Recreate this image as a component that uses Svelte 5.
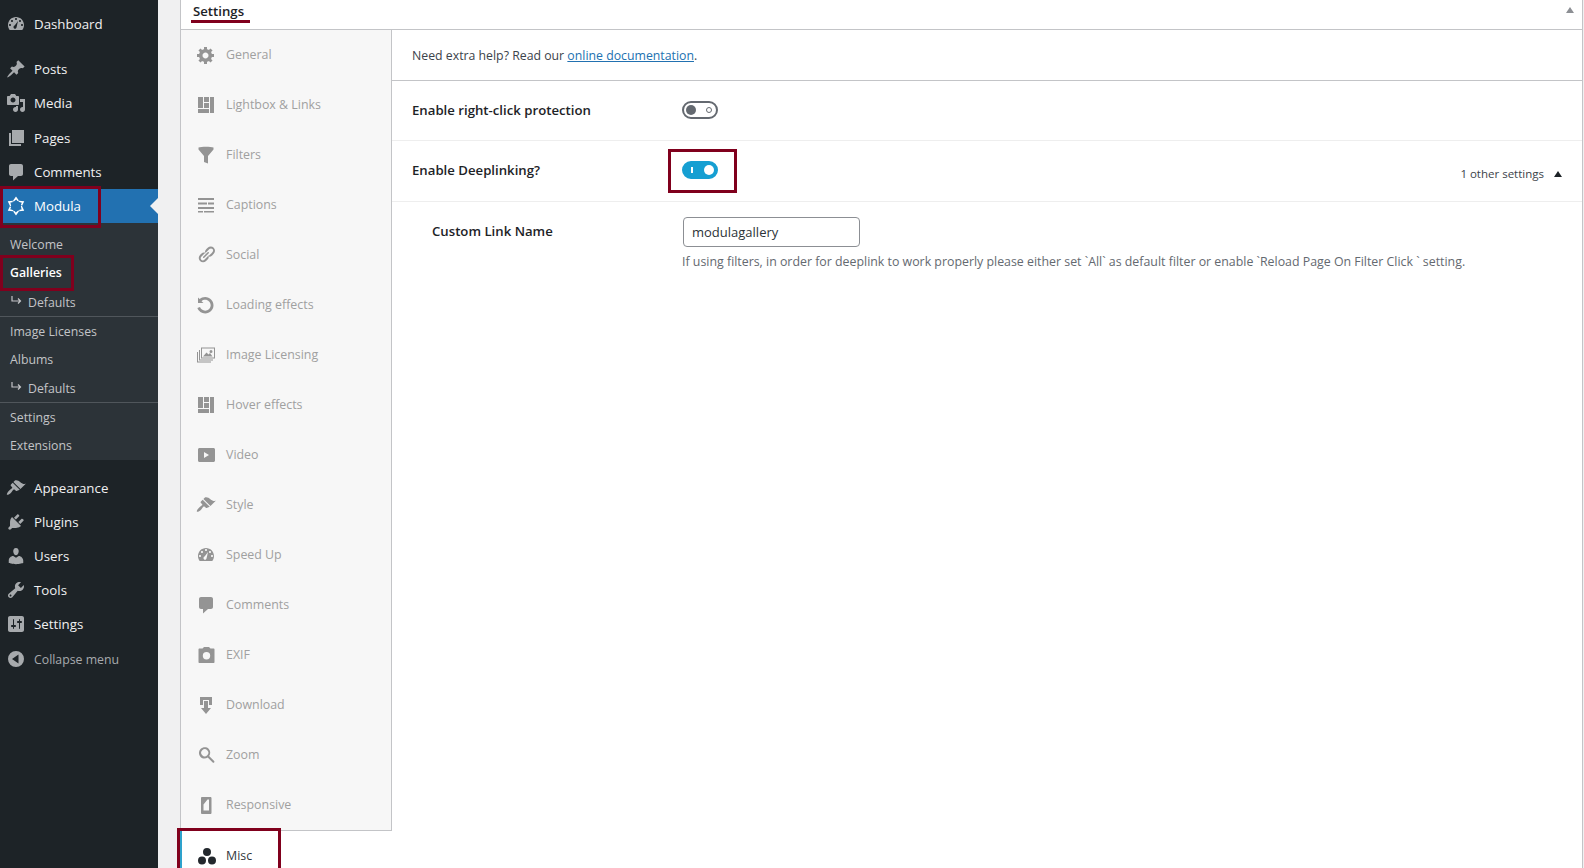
<script lang="ts">
  const icons = {
    dashboard: "M3.76 16h12.48c1.1-1.37 1.76-3.11 1.76-5 0-4.42-3.58-8-8-8s-8 3.58-8 8c0 1.89.66 3.63 1.76 5zM10 4c.55 0 1 .45 1 1s-.45 1-1 1-1-.45-1-1 .45-1 1-1zM6 6c.55 0 1 .45 1 1s-.45 1-1 1-1-.45-1-1 .45-1 1-1zm8 0c.55 0 1 .45 1 1s-.45 1-1 1-1-.45-1-1 .45-1 1-1zm-5.37 5.55L12 7l-1.5 6.5c-.3.9-1.2 1.5-2 1.2s-1.2-1.2-.9-2.1c.1-.5.5-1 1.03-1.05zM4 10c.55 0 1 .45 1 1s-.45 1-1 1-1-.45-1-1 .45-1 1-1zm12 0c.55 0 1 .45 1 1s-.45 1-1 1-1-.45-1-1 .45-1 1-1z",
    pin: "M10.44 3.02l1.82-1.82 6.36 6.35-1.83 1.82c-1.05-.68-2.48-.57-3.41.36l-.75.75c-.92.93-1.04 2.35-.35 3.41l-1.83 1.82-2.41-2.41-2.8 2.79c-.42.42-3.38 2.71-3.8 2.29s1.86-3.39 2.28-3.81l2.79-2.79L4.1 9.36l1.83-1.82c1.05.69 2.48.57 3.4-.36l.75-.75c.93-.92 1.05-2.35.36-3.41z",
    media: "M13 11V4c0-.55-.45-1-1-1h-1.67L9 1H5L3.67 3H2c-.55 0-1 .45-1 1v7c0 .55.45 1 1 1h10c.55 0 1-.45 1-1zM7 4.5c1.38 0 2.5 1.12 2.5 2.5S8.38 9.5 7 9.5 4.5 8.38 4.5 7 5.62 4.5 7 4.5zM14 6h5v10.5c0 1.38-1.12 2.5-2.5 2.5S14 17.88 14 16.5s1.12-2.5 2.5-2.5c.17 0 .34.02.5.05V9h-3V6zm-4 8.05V13h2v3.5c0 1.38-1.12 2.5-2.5 2.5S7 17.88 7 16.5 8.12 14 9.5 14c.17 0 .34.02.5.05z",
    pages: "M6 15V2h12v13H6zm-1 1h10v2H3V5h2v11z",
    comment: "M5 2h10c1.1 0 2 .9 2 2v8c0 1.1-.9 2-2 2h-3l-5 4.5V14H5c-1.1 0-2-.9-2-2V4c0-1.1.9-2 2-2z",
    brush: "M14.48 11.06L7.41 3.99l1.5-1.5c.5-.56 2.3-.47 3.51.32 1.21.8 1.43 1.28 2.91 2.1 1.18.64 2.45 1.26 4.45.85zm-.71.71L6.7 4.7 4.93 6.47c-.39.39-.39 1.02 0 1.41l1.06 1.06c.39.39.39 1.03 0 1.42-.6.6-1.43 1.11-2.21 1.69-.35.26-.7.53-1.01.84-1.22 1.22-2.38 3.21-1.8 3.79s2.6-.57 3.82-1.79c.31-.31.58-.66.84-1.01.58-.78 1.09-1.61 1.69-2.21.39-.39 1.03-.39 1.42 0l1.06 1.06c.39.39 1.02.39 1.41 0z",
    plugin: "M13.11 4.36L9.87 7.6 8 5.73l3.24-3.24c.35-.34 1.05-.2 1.56.32.52.51.66 1.21.31 1.55zm-8 1.77l.91-1.12 9.01 9.01-1.19.84c-.71.71-2.63 1.16-3.82 1.16H6.14L4.9 17.26c-.59.59-1.54.59-2.12 0-.59-.58-.59-1.53 0-2.12l1.24-1.24v-3.88c0-1.13.4-3.19 1.09-3.89zm7.26 3.97l3.24-3.24c.34-.35 1.04-.21 1.55.31.52.51.66 1.21.31 1.55l-3.24 3.25z",
    user: "M10 9.25c-2.27 0-2.73-3.44-2.73-3.44C7 4.02 7.82 2 9.97 2c2.16 0 2.98 2.02 2.71 3.81 0 0-.41 3.44-2.68 3.44zm0 2.57L12.72 10c2.39 0 4.52 2.33 4.52 4.53v2.49s-3.65 1.13-7.24 1.13c-3.65 0-7.24-1.13-7.24-1.13v-2.49c0-2.25 1.94-4.48 4.47-4.48z",
    tool: "M16.68 9.77c-1.34 1.34-3.3 1.67-4.95.99l-5.41 6.52c-.99.99-2.59.99-3.58 0s-.99-2.59 0-3.57l6.52-5.42c-.68-1.65-.35-3.61.99-4.95 1.28-1.28 3.12-1.62 4.72-1.06l-2.89 2.89 2.82 2.82 2.86-2.87c.53 1.58.18 3.39-1.08 4.65zM3.81 16.21c.4.39 1.04.39 1.43 0 .4-.4.4-1.04 0-1.43-.39-.4-1.03-.4-1.43 0-.39.39-.39 1.03 0 1.43z",
    sliders: "M18 16V4c0-1.1-.9-2-2-2H4c-1.1 0-2 .9-2 2v12c0 1.1.9 2 2 2h12c1.1 0 2-.9 2-2zM8 11h1c.55 0 1 .45 1 1s-.45 1-1 1H8v1.5c0 .28-.22.5-.5.5s-.5-.22-.5-.5V13H6c-.55 0-1-.45-1-1s.45-1 1-1h1V5.5c0-.28.22-.5.5-.5s.5.22.5.5V11zm5-2h-1c-.55 0-1-.45-1-1s.45-1 1-1h1V5.5c0-.28.22-.5.5-.5s.5.22.5.5V7h1c.55 0 1 .45 1 1s-.45 1-1 1h-1v5.5c0 .28-.22.5-.5.5s-.5-.22-.5-.5V9z",
    collapse: "M10 2a8 8 0 100 16 8 8 0 000-16zM12.5 5.5v9L6 10z",
    gear: "M18 12h-2.18c-.17.7-.44 1.35-.81 1.93l1.54 1.54-2.1 2.1-1.54-1.54c-.58.36-1.23.63-1.91.79V19H8v-2.18c-.68-.16-1.33-.43-1.91-.79l-1.54 1.54-2.12-2.12 1.54-1.54c-.36-.58-.63-1.23-.79-1.91H1V9.03h2.17c.16-.7.44-1.35.8-1.94L2.43 5.55l2.1-2.1 1.54 1.54c.58-.37 1.24-.64 1.93-.81V2h3v2.18c.68.16 1.33.43 1.91.79l1.54-1.54 2.12 2.12-1.54 1.54c.36.59.64 1.24.8 1.94H18V12zm-8.5 1.5c1.66 0 3-1.34 3-3s-1.34-3-3-3-3 1.34-3 3 1.34 3 3 3z",
    layout: "M2 2h5v11H2V2zm6 0h5v5H8V2zm6 0h4v16h-4V2zM8 8h5v5H8V8zm-6 6h11v4H2v-4z",
    funnel: "M2.5 2.5c3-1 12-1 15 0v2L12 11v7.5l-4-1.5V11L2.5 4.5z",
    captions: "M2 3h16v2H2V3zm0 4.500h9v2H2v-2zm10 0h6v2h-6v-2zM2 12h16v2H2v-2zm0 4h5v1.500H2V16zm6 0h10v1.500H8V16z",
    link: "M17.74 2.76c1.68 1.69 1.68 4.41 0 6.1l-1.53 1.52c-1.12 1.12-2.7 1.5-4.13 1.15l3.65-3.65.76-.76c.84-.84.84-2.21 0-3.05-.84-.84-2.2-.84-3.05 0l-.76.76-3.65 3.65c-.35-1.43.03-3.01 1.15-4.13l1.52-1.53c1.69-1.68 4.41-1.68 6.04-.06zM8.56 7.6c1.12-1.12 .96-.3 1.15-.3l-3.65 3.65-.76.76c-.84.84-.84 2.2 0 3.05.84.84 2.21.84 3.05 0l.76-.76 3.65-3.65c.35 1.43-.03 3.01-1.15 4.13l-1.52 1.53c-1.69 1.68-4.41 1.68-6.1 0-1.68-1.69-1.68-4.41 0-6.1l1.52-1.52c.84-.84 2.2-1.2 3.6-.79zm4.2-.42c.3.3.3.78 0 1.08l-4.5 4.5c-.3.3-.78.3-1.08 0s-.3-.78 0-1.08l4.5-4.5c.3-.3.78-.3 1.08 0z",
    reload: "M2 2.5l1.6 1.6C5 2.8 7 2 9.2 2c4.6 0 8.3 3.7 8.3 8.3s-3.7 8.2-8.3 8.2c-3.6 0-6.6-2.2-7.8-5.4l2.6-1c.8 2.1 2.8 3.6 5.2 3.6 3 0 5.5-2.4 5.5-5.4s-2.5-5.5-5.5-5.5c-1.4 0-2.7.5-3.7 1.4L7.5 8H2V2.5z",
    images: "M5 2.5h14v11H5v-11zm1 1v9h12v-9H6zm1 8l3.5-4 2 2 1.5-1.5 2.5 3.5H7zm8-6.5a1.5 1.5 0 110 3 1.5 1.5 0 010-3zM3 5h1v9.5h13v1H3V5zM1 7h1v9.5h13v1H1V7z",
    video: "M3.5 3h14c.8 0 1.5.7 1.5 1.5v11c0 .8-.7 1.5-1.5 1.5h-14C2.700 17 2 16.300 2 15.500v-11C2 3.700 2.700 3 3.500 3zM8 7v6l5-3z",
    camera: "M6.500 3.500L8 2h5l1.500 1.500h3c.6 0 1 .4 1 1V17c0 .6-.4 1-1 1h-14c-.6 0-1-.4-1-1V4.500c0-.6.4-1 1-1h3zM10.500 7a3.700 3.700 0 100 7.400 3.700 3.700 0 000-7.400z",
    download: "M4 2h12v8h-3V5H7v5H4V2zm4 4h4v7h3l-5 6-5-6h3V6z",
    search: "M12.640 3.780c1.960 1.960 2.130 5.030.52 7.180l5 5c.4.400.4 1.040 0 1.440-.4.4-1.040.4-1.440 0l-5-5c-2.150 1.610-5.220 1.440-7.180-.52-2.150-2.150-2.150-5.620 0-7.770s5.950-2.480 8.100-.33zm-1.410 1.410a3.500 3.500 0 10-4.950 4.950 3.500 3.500 0 004.950-4.950z",
    phone: "M6 2h8.500c.5 0 1 .5 1 1v15c0 .500-.5 1-1 1H6c-.5 0-1-.5-1-1V3c0-.5.5-1 1-1zm1.500 2.500v11h5.500v-11h-1.500L7.500 9.500z",
    misc: "M10 2a4 4 0 110 8 4 4 0 010-8zM5 10.500a4 4 0 110 8 4 4 0 010-8zM15 10.500a4 4 0 110 8 4 4 0 010-8z",
  };

  const menuTop = [
    { label: "Posts", icon: icons.pin },
    { label: "Media", icon: icons.media },
    { label: "Pages", icon: icons.pages },
    { label: "Comments", icon: icons.comment },
  ];
  const menuBottom = [
    { label: "Appearance", icon: icons.brush },
    { label: "Plugins", icon: icons.plugin },
    { label: "Users", icon: icons.user },
    { label: "Tools", icon: icons.tool },
    { label: "Settings", icon: icons.sliders },
  ];
  const tabs = [
    { label: "General", icon: icons.gear },
    { label: "Lightbox & Links", icon: icons.layout },
    { label: "Filters", icon: icons.funnel },
    { label: "Captions", icon: icons.captions },
    { label: "Social", icon: icons.link },
    { label: "Loading effects", icon: icons.reload },
    { label: "Image Licensing", icon: icons.images },
    { label: "Hover effects", icon: icons.layout },
    { label: "Video", icon: icons.video },
    { label: "Style", icon: icons.brush },
    { label: "Speed Up", icon: icons.dashboard },
    { label: "Comments", icon: icons.comment },
    { label: "EXIF", icon: icons.camera },
    { label: "Download", icon: icons.download },
    { label: "Zoom", icon: icons.search },
    { label: "Responsive", icon: icons.phone },
  ];
</script>

{#snippet childArrow()}
  <svg class="arrow" viewBox="0 0 11 9"><path d="M1 0v5h8M7 2.500l2.500 2.500L7 7.500" /></svg>
{/snippet}

<div class="page">
  <nav class="sidebar">
    <a class="item dash">
      <svg viewBox="0 0 20 20"><path fill-rule="evenodd" d={icons.dashboard} /></svg>
      <span>Dashboard</span>
    </a>
    {#each menuTop as m}
      <a class="item">
        <svg viewBox="0 0 20 20"><path fill-rule="evenodd" d={m.icon} /></svg>
        <span>{m.label}</span>
      </a>
    {/each}
    <a class="item current">
      <svg viewBox="0 0 20 20">
        {#each [0, 60, 120, 180, 240, 300] as deg}
          <path d="M10 .5l3 4.300-1.600.3-1.200-1.700-2.600 2.400-.6-1z" transform="rotate({deg} 10 10)" />
        {/each}
      </svg>
      <span>Modula</span>
      <i class="notch"></i>
    </a>
    <div class="submenu">
      <a class="sub">Welcome</a>
      <a class="sub strong">Galleries</a>
      <a class="sub child">{@render childArrow()}Defaults</a>
      <a class="sub ruled">Image Licenses</a>
      <a class="sub">Albums</a>
      <a class="sub child">{@render childArrow()}Defaults</a>
      <a class="sub ruled">Settings</a>
      <a class="sub">Extensions</a>
    </div>
    <div class="bottom">
      {#each menuBottom as m}
        <a class="item">
          <svg viewBox="0 0 20 20"><path fill-rule="evenodd" d={m.icon} /></svg>
          <span>{m.label}</span>
        </a>
      {/each}
      <a class="item collapse">
        <svg viewBox="0 0 20 20"><path fill-rule="evenodd" d={icons.collapse} /></svg>
        <span>Collapse menu</span>
      </a>
    </div>
  </nav>

  <section class="panel">
    <header class="head">
      <h2>Settings</h2>
      <i class="caret grey"></i>
    </header>
    <div class="body">
      <div class="tabcol">
        <ul class="tabs">
          {#each tabs as t}
            <li>
              <svg viewBox="0 0 20 20"><path fill-rule="evenodd" d={t.icon} /></svg>
              <span>{t.label}</span>
            </li>
          {/each}
        </ul>
        <div class="tab-active">
          <svg viewBox="0 0 20 20"><path d={icons.misc} /></svg>
          <span>Misc</span>
        </div>
      </div>
      <div class="content">
        <p class="help">Need extra help? Read our <a href="#docs">online documentation</a>.</p>
        <div class="row first-row">
          <div class="name">Enable right-click protection</div>
          <div class="toggle"><i class="knob"></i><i class="ring"></i></div>
        </div>
        <div class="row second-row">
          <div class="name">Enable Deeplinking?</div>
          <div class="toggle on"><i class="bar"></i><i class="dot"></i></div>
          <div class="more">1 other settings <i class="caret"></i></div>
        </div>
        <div class="row child-row">
          <div class="name">Custom Link Name</div>
          <div class="field">
            <input type="text" value="modulagallery" />
            <p>If using filters, in order for deeplink to work properly please either set `All` as default filter or enable `Reload Page On Filter Click ` setting.</p>
          </div>
        </div>
      </div>
    </div>
  </section>

  <!-- red annotations drawn over the screenshot -->
  <div class="mark m-modula"></div>
  <div class="mark m-galleries"></div>
  <div class="mark m-toggle"></div>
  <div class="mark m-misc"></div>
  <div class="mark m-underline"></div>
</div>

<style>
  :global(body) {
    margin: 0;
    background: #f0f0f1;
  }

  .page {
    position: relative;
    display: flex;
    height: 868px;
    overflow: hidden;
    font-family: "Open Sans", "Noto Sans", sans-serif;
    font-size: 13px;
    color: #3c434a;
  }

  .sidebar {
    width: 158px;
    flex: none;
    background: #1d2327;
    padding-top: 7px;
    box-sizing: border-box;
  }

  .item {
    display: flex;
    align-items: center;
    height: 34px;
    position: relative;
    color: #f0f0f1;
    font-size: 13.3px;
  }

  .item svg {
    width: 20px;
    height: 20px;
    margin-left: 6px;
    margin-right: 8px;
    fill: #a7aaad;
    flex: none;
  }

  .dash {
    margin-bottom: 11px;
  }

  .dash + .item + .item + .item {
    margin-top: 1px;
  }

  .current {
    background: #2271b1;
    color: #fff;
    font-weight: 500;
  }

  .current svg {
    fill: #fff;
  }

  .notch {
    position: absolute;
    right: 0;
    top: 9px;
    border: 8px solid transparent;
    border-right-color: #f0f0f1;
    border-left-width: 0;
  }

  .submenu {
    background: #2c3338;
    height: 237px;
    box-sizing: border-box;
    padding-top: 7px;
  }

  .sub {
    display: flex;
    align-items: center;
    height: 28px;
    padding-left: 10px;
    font-size: 12.3px;
    color: #c3c4c7;
  }

  .sub.strong {
    color: #fff;
    font-weight: 600;
  }

  .sub.child {
    height: 27px;
    padding-top: 2px;
  }

  .strong + .sub.child {
    padding-top: 3px;
  }

  .arrow {
    width: 11px;
    height: 9px;
    margin: -4px 6px 0 1px;
    fill: none;
    stroke: #c3c4c7;
    stroke-width: 1.200;
    flex: none;
  }

  .sub.ruled {
    border-top: 1px solid #50565b;
  }

  .bottom {
    padding-top: 11px;
  }

  .collapse {
    height: 36px;
    color: #a7aaad;
    font-size: 12.300px;
  }

  .panel {
    position: relative;
    margin-left: 22px;
    width: 1403px;
    flex: none;
    background: #fff;
    box-sizing: border-box;
    border-left: 1px solid #c3c4c7;
    border-right: 1px solid #c3c4c7;
  }

  .head {
    height: 29px;
    border-bottom: 1px solid #c3c4c7;
    display: flex;
    align-items: flex-start;
    justify-content: space-between;
  }

  .head h2 {
    margin: 0;
    padding: 1px 0 0 12px;
    font-size: 13.200px;
    font-weight: 600;
    color: #1d2327;
    line-height: 20px;
  }

  .caret {
    display: inline-block;
    width: 0;
    height: 0;
    border-left: 4.500px solid transparent;
    border-right: 4.500px solid transparent;
    border-bottom: 6px solid #1d2327;
  }

  .caret.grey {
    border-bottom-color: #8c8f94;
    margin: 7px 8px 0 0;
  }

  .body {
    display: flex;
    height: 838px;
  }

  .tabcol {
    width: 211px;
    flex: none;
  }

  .tabs {
    list-style: none;
    margin: 0;
    padding: 0;
    background: #f7f7f7;
    border-right: 1px solid #c3c4c7;
    border-bottom: 1px solid #c3c4c7;
    box-sizing: border-box;
    height: 801px;
  }

  .tabs li {
    height: 50px;
    display: flex;
    align-items: center;
    color: #a0a0a0;
    font-size: 12.400px;
  }

  .tabs li span {
    margin-bottom: 2px;
  }

  .tabs svg, .tab-active svg {
    width: 20px;
    height: 20px;
    margin-left: 15px;
    margin-right: 10px;
    fill: #949494;
    flex: none;
  }

  .tab-active {
    height: 49px;
    display: flex;
    align-items: center;
    border-left: 2px solid #2ea2cc;
    margin-left: -1px;
    box-sizing: border-box;
    color: #32373c;
    font-size: 12.400px;
  }

  .tab-active svg {
    fill: #23282d;
    margin-left: 15px;
    margin-right: 9px;
  }

  .content {
    flex: 1;
    min-width: 0;
  }

  .help {
    margin: 0;
    height: 51px;
    box-sizing: border-box;
    padding: 17px 0 0 20px;
    line-height: 18px;
    font-size: 12.300px;
    border-bottom: 1px solid #c3c4c7;
    color: #3c434a;
  }

  .help a {
    color: #2271b1;
  }

  .row {
    display: flex;
    align-items: center;
    border-bottom: 1px solid #eeeeee;
    box-sizing: border-box;
    position: relative;
  }

  .first-row {
    height: 60px;
  }

  .second-row {
    height: 61px;
  }

  .child-row {
    border-bottom: none;
    align-items: flex-start;
    padding-top: 15px;
  }

  .name {
    width: 270px;
    padding-left: 20px;
    padding-bottom: 2px;
    box-sizing: border-box;
    font-size: 13.200px;
    font-weight: 600;
    color: #1d2327;
  }

  .child-row .name {
    padding-left: 40px;
    padding-top: 5px;
  }

  .toggle {
    width: 36px;
    height: 18px;
    position: relative;
    box-sizing: border-box;
    border: 2px solid #646970;
    border-radius: 9px;
    background: #fff;
    margin: -2px 0 0 20px;
  }

  .knob {
    position: absolute;
    left: 2px;
    top: 2px;
    width: 10px;
    height: 10px;
    border-radius: 50%;
    background: #646970;
  }

  .ring {
    position: absolute;
    right: 4px;
    top: 4px;
    width: 6px;
    height: 6px;
    box-sizing: border-box;
    border: 1px solid #646970;
    border-radius: 50%;
  }

  .toggle.on {
    background: #169fd2;
    border-color: #169fd2;
  }

  .bar {
    position: absolute;
    left: 7px;
    top: 4px;
    width: 1.500px;
    height: 6px;
    background: #fff;
  }

  .dot {
    position: absolute;
    right: 2px;
    top: 2px;
    width: 10px;
    height: 10px;
    border-radius: 50%;
    background: #fff;
  }

  .more {
    position: absolute;
    right: 20px;
    top: 24px;
    font-size: 11.500px;
    line-height: 18px;
    display: flex;
    align-items: center;
    gap: 10px;
  }

  .field {
    padding-left: 21px;
  }

  .field input {
    display: block;
    width: 177px;
    height: 30px;
    box-sizing: border-box;
    border: 1px solid #8c8f94;
    border-radius: 4px;
    padding: 0 8px;
    font: inherit;
    font-size: 13px;
    color: #2c3338;
    background: #fff;
  }

  .field p {
    margin: 5px 0 0 -1px;
    font-size: 12.360px;
    line-height: 20px;
    color: #646970;
    white-space: nowrap;
  }

  .mark {
    position: absolute;
    box-sizing: border-box;
    border: 3px solid #80001d;
  }

  .m-modula {
    left: 0;
    top: 186px;
    width: 101px;
    height: 42px;
  }

  .m-galleries {
    left: 0;
    top: 255px;
    width: 74px;
    height: 36px;
  }

  .m-toggle {
    left: 668px;
    top: 149px;
    width: 69px;
    height: 44px;
  }

  .m-misc {
    left: 177px;
    top: 828px;
    width: 104px;
    height: 44px;
  }

  .m-underline {
    left: 191px;
    top: 20px;
    width: 59px;
    height: 3px;
    border: none;
    background: #80001d;
  }
</style>
